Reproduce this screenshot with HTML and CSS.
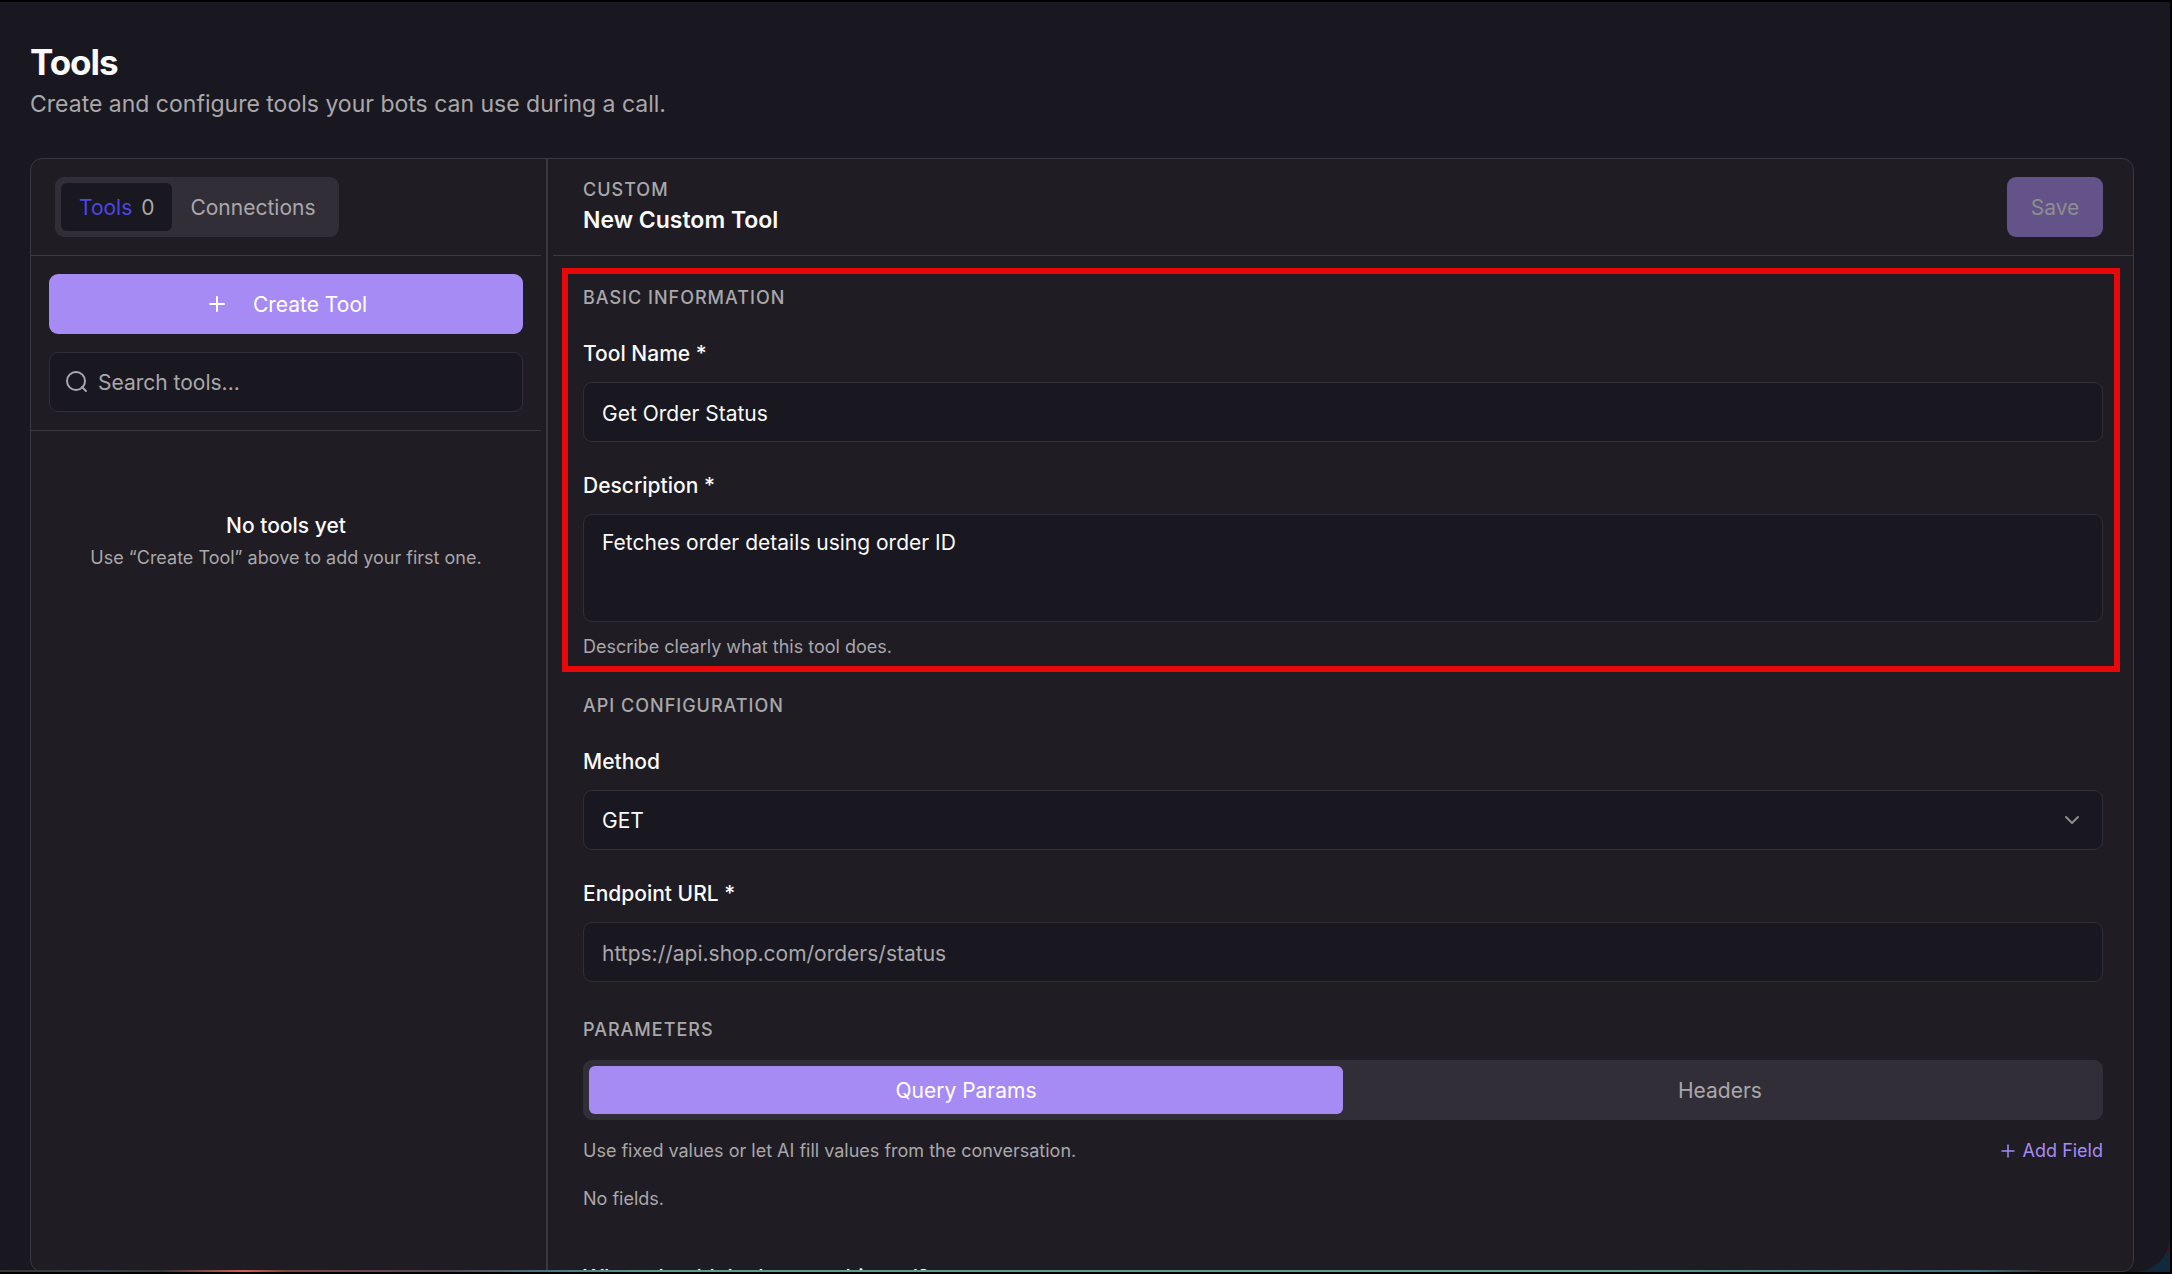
FILE: index.html
```html
<!DOCTYPE html>
<html lang="en">
<head>
<meta charset="utf-8">
<title>Tools</title>
<link rel="stylesheet" href="styles.css">
</head>
<body>
<div class="desktop">
<main class="page">
  <header class="page-head">
    <h1 class="page-title">Tools</h1>
    <p class="page-subtitle">Create and configure tools your bots can use during a call.</p>
  </header>

  <div class="panel">
    <aside class="sidebar">
      <div class="sidebar-tabs">
        <div class="tabs">
          <button class="tab tab-active" type="button">Tools <span class="count">0</span></button>
          <button class="tab" type="button">Connections</button>
        </div>
      </div>
      <div class="sidebar-actions">
        <button class="create" type="button">
          <svg class="icon" viewBox="0 0 24 24" aria-hidden="true"><path d="M5 12h14M12 5v14"/></svg>
          <span class="create-text">Create Tool</span>
        </button>
        <label class="search">
          <svg class="icon" viewBox="0 0 24 24" aria-hidden="true"><circle cx="11" cy="11" r="9"/><path d="m21 21-4-4"/></svg>
          <input class="search-input" type="search" placeholder="Search tools..." aria-label="Search tools">
        </label>
      </div>
      <div class="empty">
        <p class="empty-title">No tools yet</p>
        <p class="note">Use “Create Tool” above to add your first one.</p>
      </div>
    </aside>

    <div class="divider"></div>

    <form class="editor">
      <div class="editor-head">
        <div>
          <p class="eyebrow">CUSTOM</p>
          <h2 class="editor-title">New Custom Tool</h2>
        </div>
        <button class="save" type="button" disabled>Save</button>
      </div>
      <div class="editor-body">
        <section class="section highlighted">
          <h3 class="section-title">BASIC INFORMATION</h3>
          <div class="field">
            <label class="label" for="name">Tool Name *</label>
            <input class="control" id="name" type="text" value="Get Order Status">
          </div>
          <div class="field">
            <label class="label" for="description">Description *</label>
            <textarea class="control control-area" id="description">Fetches order details using order ID</textarea>
            <p class="note hint">Describe clearly what this tool does.</p>
          </div>
        </section>

        <section class="section">
          <h3 class="section-title">API CONFIGURATION</h3>
          <div class="field">
            <label class="label" for="method">Method</label>
            <div class="select-wrap">
              <select class="control" id="method"><option>GET</option><option>POST</option></select>
              <svg class="icon chevron" viewBox="0 0 24 24" aria-hidden="true"><path d="m6 9 6 6 6-6"/></svg>
            </div>
          </div>
          <div class="field">
            <label class="label" for="url">Endpoint URL *</label>
            <input class="control" id="url" type="url" placeholder="https://api.shop.com/orders/status">
          </div>
        </section>

        <section class="section section-params">
          <h3 class="section-title">PARAMETERS</h3>
          <div class="tabs tabs-wide">
            <button class="tab tab-primary" type="button">Query Params</button>
            <button class="tab" type="button">Headers</button>
          </div>
          <div class="params-row">
            <p class="note">Use fixed values or let AI fill values from the conversation.</p>
            <button class="add" type="button">
              <svg class="icon icon-small" viewBox="0 0 24 24" aria-hidden="true"><path d="M4 12h16M12 4v16"/></svg>
              Add Field
            </button>
          </div>
          <p class="note">No fields.</p>
        </section>
        <p class="label more">When should the bot use this tool?</p>
      </div>
    </form>
  </div>
  <div class="glow"></div>
</main>
</div>
</body>
</html>
```
FILE: styles.css
```css
* { box-sizing: border-box; }

body {
  margin: 0;
  padding: 2px 2px 2px 0;
  background: #000;
  color: #fafafa;
  font: 21px/30px Inter, "Liberation Sans", sans-serif;
}

h1, h2, h3, p { margin: 0; }

button, input, select, textarea { font: inherit; color: inherit; }

button { border: 0; padding: 0; cursor: pointer; }

/* Wallpaper that shows past the window's rounded corner */
.desktop { background: linear-gradient(0deg, #11293a 19px, #3a1520 19px); }

.page {
  position: relative;
  display: flex;
  flex-direction: column;
  height: calc(100vh - 4px);
  padding: 38px 36px 0 30px;
  overflow: hidden;
  border-bottom-right-radius: 36px;
  background: #191720;
}

.page-head { padding-bottom: 34px; }
.page-title { font-size: 35px; line-height: 44px; font-weight: 700; letter-spacing: -1px; }
.page-subtitle { font-size: 23px; line-height: 40px; color: #a9a8aa; }

.panel {
  display: flex;
  flex: 1;
  min-height: 0;
  overflow: hidden;
  border: 1px solid #3b3842;
  border-radius: 12px;
  background: #1f1c24;
}

.sidebar { width: 510px; }
.sidebar-tabs { padding: 18px 24px; border-bottom: 1px solid #3b3842; }

.tabs {
  display: inline-flex;
  height: 60px;
  padding: 6px;
  border-radius: 9px;
  background: #322e38;
  vertical-align: top;
}
.tab { padding: 2px 18px 0; border-radius: 6px; background: none; color: #a9a8aa; }
.tab-active { background: #191720; color: #4f46e5; }
.count { margin-left: 3px; color: #a9a8aa; }
.tabs-wide { display: flex; }
.tabs-wide .tab { flex: 1; }
.tab-primary { background: #a78bf5; color: #fff; }

.sidebar-actions {
  display: flex;
  flex-direction: column;
  gap: 18px;
  padding: 18px;
  border-bottom: 1px solid #3b3842;
}

.icon {
  width: 24px;
  height: 24px;
  flex: none;
  fill: none;
  stroke: currentColor;
  stroke-width: 2;
  stroke-linecap: round;
  stroke-linejoin: round;
}

.create {
  display: flex;
  align-items: center;
  justify-content: center;
  gap: 24px;
  height: 60px;
  border-radius: 9px;
  background: #a78bf5;
  color: #fff;
}
.create-text { padding-top: 2px; }

.search {
  display: flex;
  align-items: center;
  gap: 9px;
  height: 60px;
  padding: 0 15px;
  border: 1px solid #322e38;
  border-radius: 9px;
  background: #191720;
  color: #a9a8aa;
}
.search-input { flex: 1; min-width: 0; padding: 2px 0 0; border: 0; outline: 0; background: none; }

::placeholder { color: #a9a8aa; opacity: 1; }

.empty { padding: 78px 18px; text-align: center; }
.empty-title { font-weight: 500; line-height: 34px; }

.note { font-size: 18px; line-height: 30px; color: #a9a8aa; }

.divider { width: 2px; margin: 0 5px; background: #3b3842; }

.editor { flex: 1; min-width: 0; }
.editor-head {
  display: flex;
  align-items: center;
  justify-content: space-between;
  height: 97px;
  padding: 0 30px;
  border-bottom: 1px solid #3b3842;
}
.eyebrow, .section-title {
  font-size: 18px;
  line-height: 24px;
  font-weight: 500;
  letter-spacing: 1px;
  color: #a9a8aa;
}
.eyebrow { padding-top: 2px; }
.editor-title { font-size: 23px; line-height: 36px; font-weight: 600; }

.save {
  width: 96px;
  height: 60px;
  padding-top: 2px;
  border-radius: 9px;
  background: #635389;
  color: #8e8d90;
}

.editor-body { padding: 12px 14px 0 9px; }
.section { padding: 0 16px 0 21px; }
.highlighted {
  margin-right: -1px;
  padding: 12px 11px 4px 15px;
  border: 6px solid #e90808;
}
.highlighted + .section { padding-top: 22px; }

.field { padding-top: 29px; }
.label { display: block; padding-bottom: 13px; font-weight: 500; }
.control {
  display: block;
  width: 100%;
  height: 60px;
  padding: 2px 18px 0;
  border: 1px solid #322e38;
  border-radius: 9px;
  outline: 0;
  background: #191720;
  appearance: none;
}
.control-area { height: 108px; padding: 13px 18px; resize: none; }
.hint { padding-top: 10px; }

.select-wrap { display: grid; align-items: center; }
.select-wrap > * { grid-area: 1 / 1; }
.chevron { justify-self: end; margin-right: 19px; color: #8e8d90; pointer-events: none; }

.section-params { padding-top: 36px; }
.section-params .tabs { margin: 18px 0 16px; }
.params-row { display: flex; justify-content: space-between; margin-bottom: 18px; }
.add {
  display: flex;
  align-items: center;
  gap: 6px;
  background: none;
  color: #a78bf5;
  font-size: 18px;
}
.icon-small { width: 18px; height: 18px; }
.more { padding: 49px 21px 0; }

/* Wallpaper light along the lower window edge */
.glow {
  position: absolute;
  inset: auto 130px 0 0;
  height: 2px;
  background: linear-gradient(90deg, #3b3835, #33444f 5%, #3b3835 8%, #d95f5a 12%, #7a4640 14%, #54495a 22%, #4a7684 27%, #5a9c90 32%, #5a9c90 80%, #3f7480 97%, #3b3842);
}
```
